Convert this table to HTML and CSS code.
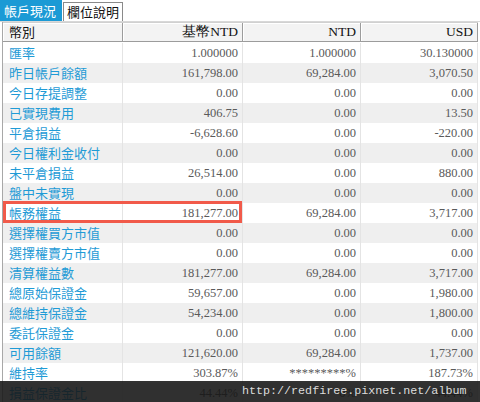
FILE: index.html
```html
<!DOCTYPE html>
<html lang="zh-Hant">
<head>
<meta charset="utf-8">
<link rel="stylesheet" href="styles.css">
</head>
<body>
<div class="page">
  <div class="tabs">
    <div class="tab active">帳戶現況</div>
    <div class="tab">欄位說明</div>
  </div>
  <div class="table">
    <div class="row head">
      <div class="cell label">幣別</div>
      <div class="cell">基幣NTD</div>
      <div class="cell">NTD</div>
      <div class="cell">USD</div>
    </div>
    <div class="row"><div class="cell label">匯率</div><div class="cell">1.000000</div><div class="cell">1.000000</div><div class="cell">30.130000</div></div>
    <div class="row alt"><div class="cell label">昨日帳戶餘額</div><div class="cell">161,798.00</div><div class="cell">69,284.00</div><div class="cell">3,070.50</div></div>
    <div class="row"><div class="cell label">今日存提調整</div><div class="cell">0.00</div><div class="cell">0.00</div><div class="cell">0.00</div></div>
    <div class="row alt"><div class="cell label">已實現費用</div><div class="cell">406.75</div><div class="cell">0.00</div><div class="cell">13.50</div></div>
    <div class="row"><div class="cell label">平倉損益</div><div class="cell">-6,628.60</div><div class="cell">0.00</div><div class="cell">-220.00</div></div>
    <div class="row alt"><div class="cell label">今日權利金收付</div><div class="cell">0.00</div><div class="cell">0.00</div><div class="cell">0.00</div></div>
    <div class="row"><div class="cell label">未平倉損益</div><div class="cell">26,514.00</div><div class="cell">0.00</div><div class="cell">880.00</div></div>
    <div class="row alt"><div class="cell label">盤中未實現</div><div class="cell">0.00</div><div class="cell">0.00</div><div class="cell">0.00</div></div>
    <div class="row"><div class="cell label">帳務權益</div><div class="cell">181,277.00</div><div class="cell">69,284.00</div><div class="cell">3,717.00</div></div>
    <div class="row alt"><div class="cell label">選擇權買方市值</div><div class="cell">0.00</div><div class="cell">0.00</div><div class="cell">0.00</div></div>
    <div class="row"><div class="cell label">選擇權賣方市值</div><div class="cell">0.00</div><div class="cell">0.00</div><div class="cell">0.00</div></div>
    <div class="row alt"><div class="cell label">清算權益數</div><div class="cell">181,277.00</div><div class="cell">69,284.00</div><div class="cell">3,717.00</div></div>
    <div class="row"><div class="cell label">總原始保證金</div><div class="cell">59,657.00</div><div class="cell">0.00</div><div class="cell">1,980.00</div></div>
    <div class="row alt"><div class="cell label">總維持保證金</div><div class="cell">54,234.00</div><div class="cell">0.00</div><div class="cell">1,800.00</div></div>
    <div class="row"><div class="cell label">委託保證金</div><div class="cell">0.00</div><div class="cell">0.00</div><div class="cell">0.00</div></div>
    <div class="row alt"><div class="cell label">可用餘額</div><div class="cell">121,620.00</div><div class="cell">69,284.00</div><div class="cell">1,737.00</div></div>
    <div class="row"><div class="cell label">維持率</div><div class="cell">303.87%</div><div class="cell">*********%</div><div class="cell">187.73%</div></div>
    <div class="row alt"><div class="cell label">損益保證金比</div><div class="cell">44.44%</div><div class="cell">0%</div><div class="cell">44.44%</div></div>
    <div class="highlight"></div>
  </div>
  <div class="watermark">http://redfiree.pixnet.net/album</div>
</div>
</body>
</html>
```

FILE: styles.css
```css
* { box-sizing: border-box; }
html, body { margin: 0; padding: 0; background: #fff; }
.page {
  position: relative;
  width: 480px;
  height: 402px;
  overflow: hidden;
  font-family: "Noto Sans CJK TC", "Liberation Sans", sans-serif;
}
.tabs {
  display: flex;
  height: 22px;
  align-items: flex-end;
  border-bottom: 1px solid #d8d8d8;
  padding-left: 0;
}
.tab {
  height: 19px;
  line-height: 18px;
  font-size: 13px;
  padding: 0 3px;
  margin-left: 1px;
  color: #111;
  background: #fff;
  border: 1px solid #8a8a8a;
  border-bottom: none;
}
.tab.active {
  height: 21px;
  line-height: 20px;
  margin-left: 0;
  padding: 0 5px 0 3px;
  background: #1b9ad5;
  border-color: #1b9ad5;
  color: #fff;
}
.table {
  position: relative;
  margin-left: 2px;
  width: 476px;
  border-left: 1px solid #a8a8a8;
}
.row {
  display: grid;
  grid-template-columns: 120px 120px 118px 117px;
  height: 20px;
}
.row.alt { background: #efefef; }
.cell {
  font-family: "Liberation Serif", serif;
  font-size: 12.5px;
  color: #5a5a5a;
  text-align: right;
  padding-right: 4px;
  line-height: 20px;
  border-right: 1px solid #e4e4e4;
  white-space: nowrap;
  overflow: hidden;
}
.cell.label {
  font-family: "Noto Sans CJK TC", sans-serif;
  font-size: 13px;
  color: #1f9bd6;
  text-align: left;
  padding-left: 6px;
  line-height: 20px;
}
.row.head {
  height: 20px;
  margin-top: 0;
  margin-bottom: 1px;
  background: #f3f3f3;
  border-top: 1px solid #d0d0d0;
}
.row.head .cell {
  color: #111;
  font-size: 13.5px;
  line-height: 18px;
  border-right: 1px solid #9c9c9c;
  border-bottom: 1px solid #9c9c9c;
  box-shadow: inset 1px 1px 0 #fff;
}
.row.head .cell.label {
  font-family: "Noto Sans CJK TC", sans-serif;
  font-size: 13px;
  color: #111;
  padding-left: 6px;
}
.highlight {
  position: absolute;
  left: 0;
  top: 179px;
  width: 239px;
  height: 22px;
  border: 3px solid #f15a4a;
}
.watermark {
  position: absolute;
  left: 0;
  right: 0;
  bottom: 0;
  height: 21px;
  background: rgba(22, 22, 22, 0.88);
  color: #dcdcdc;
  font-family: "Liberation Mono", monospace;
  font-size: 11.7px;
  line-height: 21px;
  padding-left: 242px;
  white-space: nowrap;
}
```
